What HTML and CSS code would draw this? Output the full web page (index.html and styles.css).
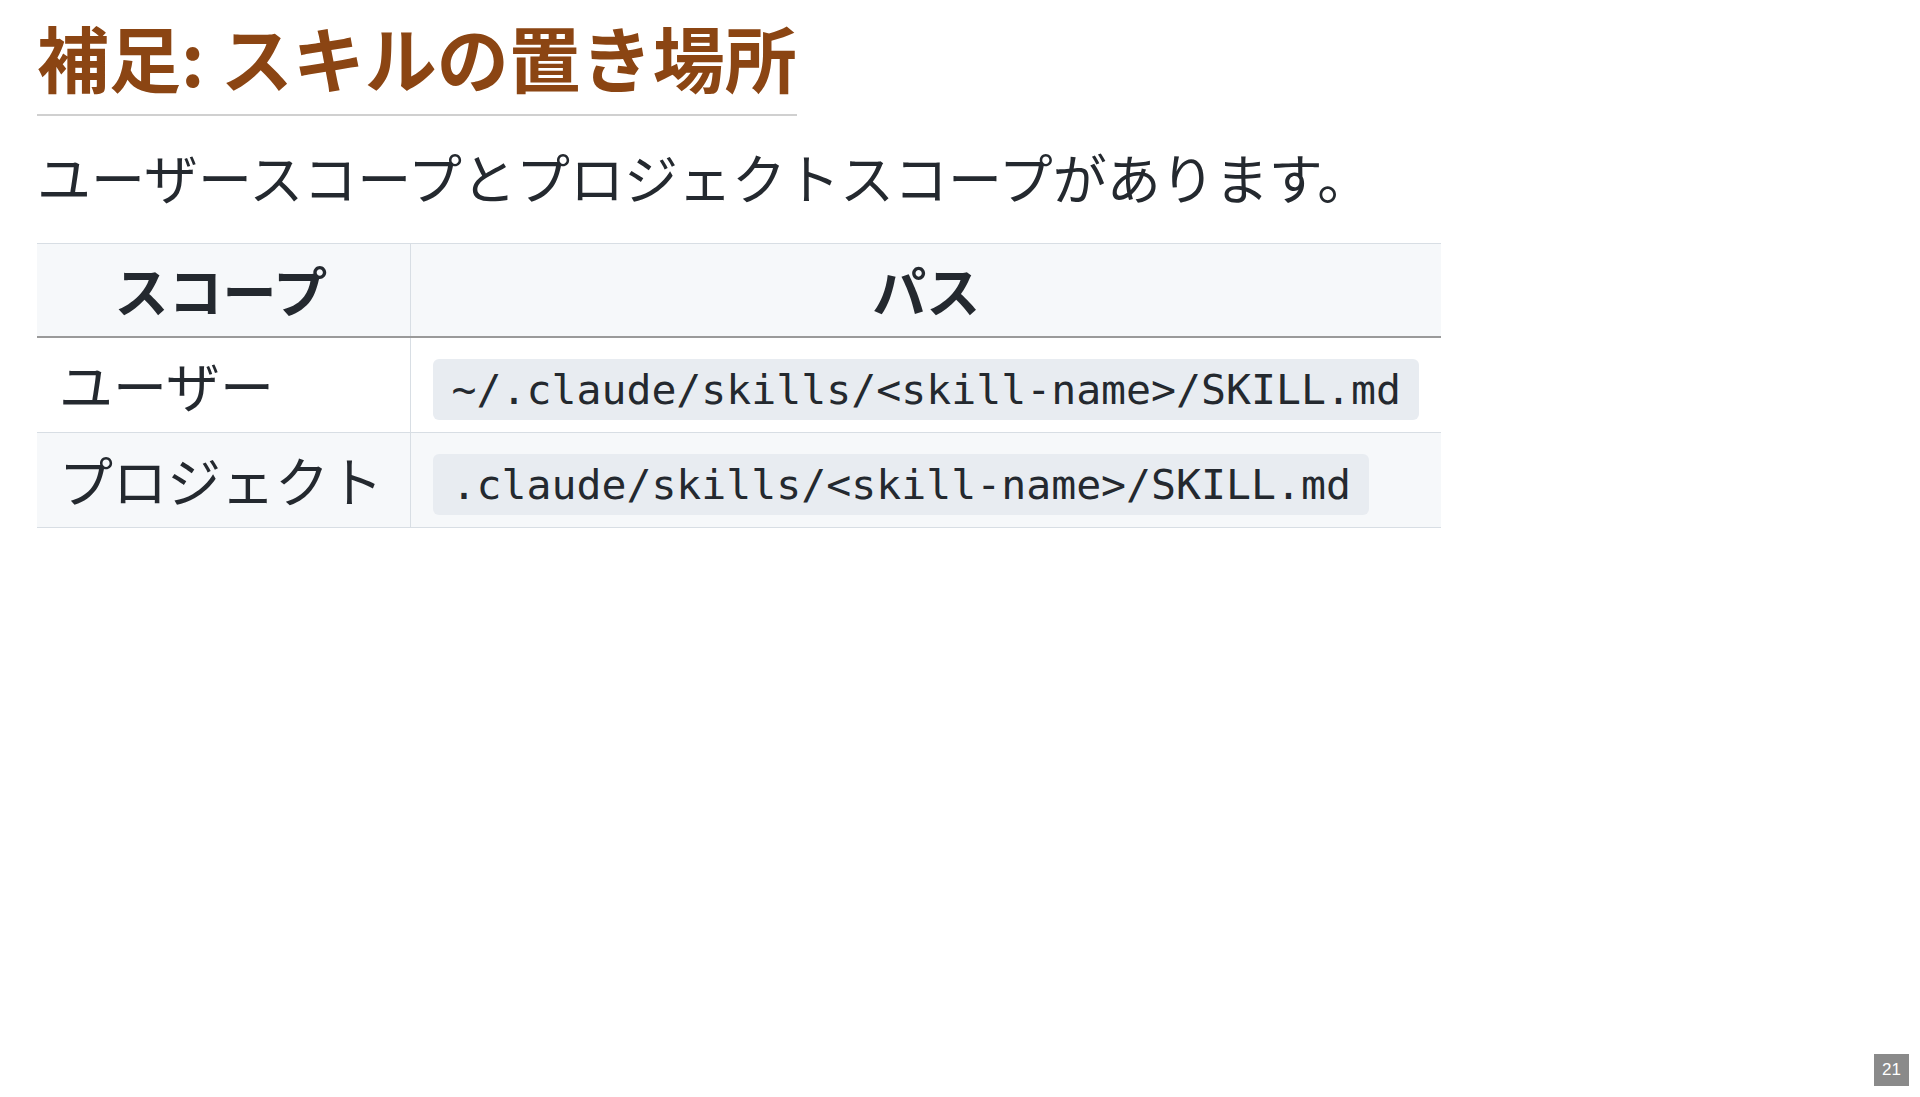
FILE: index.html
```html
<!DOCTYPE html>
<html lang="ja">
<head>
  <meta charset="UTF-8">
  <title>補足: スキルの置き場所</title>
  <link rel="stylesheet" href="styles.css">
</head>
<body>

  <section class="slide">
    <h1>補足: スキルの置き場所</h1>
    <p>ユーザースコープとプロジェクトスコープがあります。</p>

    <table class="paths">
      <thead>
        <tr>
          <th>スコープ</th>
          <th>パス</th>
        </tr>
      </thead>
      <tbody>
        <tr>
          <td>ユーザー</td>
          <td><code>~/.claude/skills/&lt;skill-name&gt;/SKILL.md</code></td>
        </tr>
        <tr>
          <td>プロジェクト</td>
          <td><code>.claude/skills/&lt;skill-name&gt;/SKILL.md</code></td>
        </tr>
      </tbody>
    </table>

    <div class="page-num">21</div>
  </section>

</body>
</html>
```

FILE: styles.css
```css
* {
  margin: 0; padding: 0; box-sizing: border-box;
}

body {
  font-family: 'Noto Sans CJK JP', 'Noto Sans', sans-serif;
  background: #fff;
  color: #24292f;
}

.slide {
  position: relative;
  width: 1920px;
  height: 1097px;
  padding: 15px 37px;
  font-size: 54px;
  line-height: 1.5;
}

.slide h1 {
  width: fit-content;
  font-size: 72px;
  line-height: 1.15;
  font-weight: 700;
  color: #8b4513;
  padding-bottom: 16px;
  border-bottom: 2px solid #d0d0d0;
  margin-bottom: 20px;
}

.slide p {
  margin-bottom: 26px;
}

.paths {
  border-collapse: collapse;
}

.paths th {
  background: #f6f8fa;
  font-weight: 700;
  text-align: center;
  padding: 5.5px 22px;
  border-top: 1px solid #d8dee4;
  border-bottom: 2px solid #9a9a9a;
}

.paths td {
  padding: 6.5px 22px;
  border-bottom: 1px solid #d8dee4;
}

.paths th:first-child,
.paths td:first-child {
  padding-left: 22px;
  padding-right: 27px;
}

.paths th + th,
.paths td + td {
  border-left: 1px solid #d8dee4;
}

.paths tbody tr:nth-child(2) td {
  background: #f6f8fa;
}

.paths code {
  font-family: 'DejaVu Sans Mono', monospace;
  font-size: 41.5px;
  background: #e8ecf1;
  border-radius: 6px;
  padding: 6px 18.5px;
  vertical-align: 4px;
}

.page-num {
  position: absolute;
  right: 11px;
  bottom: 11px;
  width: 35px;
  height: 32px;
  background: #8a8a8a;
  color: #fff;
  font-family: 'Liberation Sans', sans-serif;
  font-size: 17px;
  line-height: 32px;
  text-align: center;
}
```
